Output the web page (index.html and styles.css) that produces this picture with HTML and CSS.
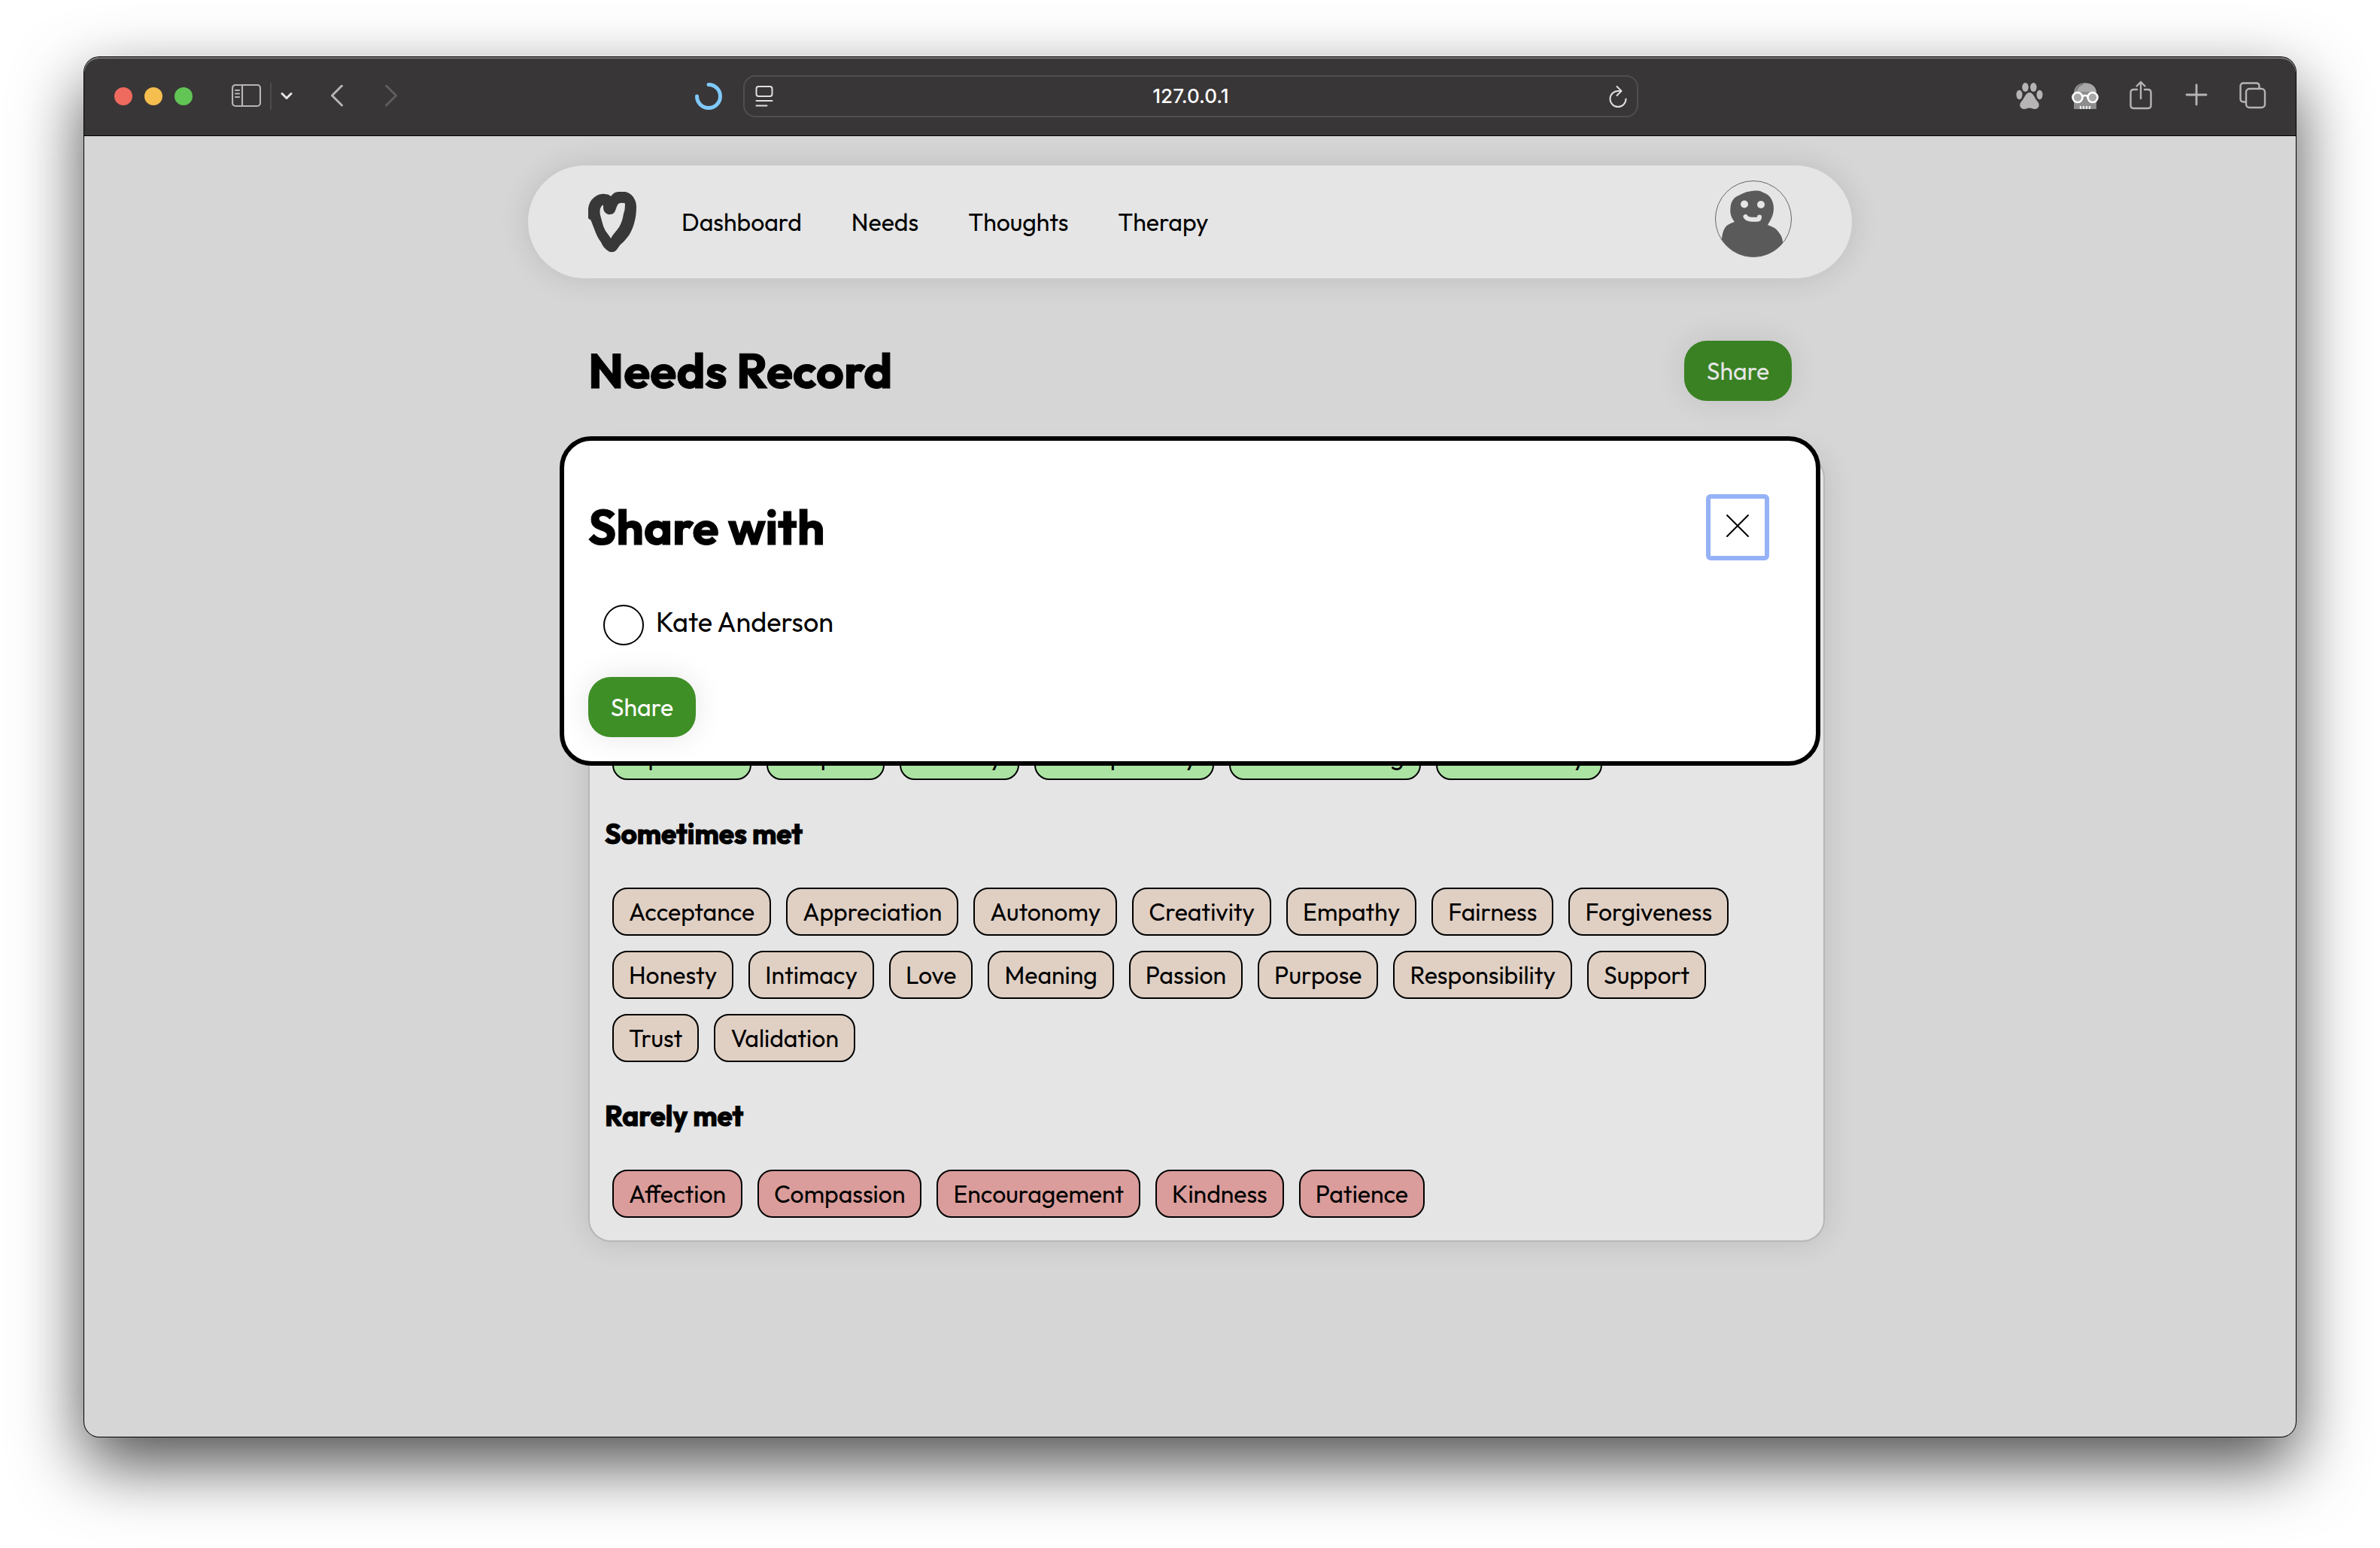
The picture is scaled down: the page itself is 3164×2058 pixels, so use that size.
FILE: index.html
```html
<!DOCTYPE html>
<html lang="en">
<head>
<meta charset="utf-8">
<title>Needs Record</title>
<link rel="stylesheet" href="styles.css">
</head>
<body>
<div class="window">
  <header class="toolbar">
    <div class="toolbar-left">
      <div class="lights"><span class="light red"></span><span class="light yellow"></span><span class="light green"></span></div>
      <div class="sidebar-tools">
        <button class="tool" aria-label="Sidebar"><svg width="39" height="32" viewBox="0 0 39 32" fill="none" stroke="#b7b4b5" stroke-width="2.200"><rect x="1" y="1" width="37" height="28" rx="4"/><path d="M14 1v28"/><path d="M5 8h5M5 12.500h5M5 17h5" stroke-linecap="round"/></svg></button>
        <span class="divider"></span>
        <button class="tool" aria-label="Tab groups"><svg width="16" height="12" viewBox="0 0 16 12" fill="none" stroke="#e6e5e5" stroke-width="3" stroke-linecap="round" stroke-linejoin="round"><path d="M2 2.500l6 6 6-6"/></svg></button>
      </div>
      <div class="history">
        <button class="tool" aria-label="Back"><svg width="18" height="30" viewBox="0 0 18 30" fill="none" stroke="#b7b4b5" stroke-width="3" stroke-linecap="round" stroke-linejoin="round"><path d="M15.500 1L2.500 14l13 13"/></svg></button>
        <button class="tool" aria-label="Forward"><svg width="18" height="30" viewBox="0 0 18 30" fill="none" stroke="#5f5d5e" stroke-width="3" stroke-linecap="round" stroke-linejoin="round"><path d="M2.500 1l13 13-13 13"/></svg></button>
      </div>
      <svg class="spinner" width="36" height="36" viewBox="0 0 36 36" fill="none" stroke="#7fc9fb" stroke-width="5" stroke-linecap="round"><path d="M18 2.500A15.500 15.500 0 1 1 2.500 18"/></svg>
    </div>
    <div class="address">
      <svg width="24" height="30" viewBox="0 0 24 30" fill="none" stroke="#e0dfdf" stroke-width="2" stroke-linecap="round"><rect x="1.500" y="2" width="21" height="13" rx="3"/><path d="M1.500 21h21M1.500 27.500h14"/></svg>
      <input class="url" type="text" value="127.0.0.1" aria-label="Address">
      <button class="tool" aria-label="Reload"><svg width="26" height="30" viewBox="0 0 26 30" fill="none" stroke="#e0dfdf" stroke-width="2" stroke-linecap="round" stroke-linejoin="round"><path d="M16.500 8H13A10.500 10.500 0 1 0 23.500 18.500M11.500 2l6 6-6 6"/></svg></button>
    </div>
    <div class="toolbar-right">
      <button class="tool" aria-label="Paw extension"><svg width="40" height="40" viewBox="0 0 40 40" fill="#b7b4b5"><ellipse cx="14.500" cy="10" rx="4.300" ry="6"/><ellipse cx="25.300" cy="10" rx="4.300" ry="6"/><ellipse cx="6.500" cy="20" rx="4" ry="6.200"/><ellipse cx="33.500" cy="20" rx="4" ry="6.200"/><path d="M20 17C15 17 13.500 24 10 28C5 33 7.500 39 13 39C16 39 17 37.500 20 37.500S24 39 27 39C32.500 39 35 33 30 28C26.500 24 25 17 20 17Z"/></svg></button>
      <button class="tool" aria-label="Privacy extension"><svg width="40" height="40" viewBox="0 0 40 40"><path d="M5 19C5 9 11 4.500 20 4.500S35 9 35 19V39H5Z" fill="#8d8d8d"/><path d="M6 16C7 8.500 12 4.500 20 4.500S34 9 35 16Z" fill="#a8a8a8"/><path d="M8 15C9 10 12 7 17 6" stroke="#787878" stroke-width="2" fill="none"/><g fill="#a9a9a9" stroke="#fff" stroke-width="2.600"><circle cx="10" cy="23.500" r="6.500"/><circle cx="30" cy="23.500" r="6.500"/><path d="M16.500 22q3.500-2 7 0" fill="none"/></g><path d="M14 35v4M18 35v4M22 35v4M26 35v4" stroke="#e8e8e8" stroke-width="2.400"/></svg></button>
      <button class="tool" aria-label="Share page"><svg width="40" height="40" viewBox="0 0 40 40" fill="none" stroke="#b7b4b5" stroke-width="2.400" stroke-linecap="round" stroke-linejoin="round"><path d="M15 13h-4.500q-4 0-4 4v17q0 4 4 4h19q4 0 4-4V17q0-4-4-4H25M20 25V3M14.500 8.500L20 3l5.500 5.500"/></svg></button>
      <button class="tool" aria-label="New tab"><svg width="40" height="40" viewBox="0 0 40 40" fill="none" stroke="#b7b4b5" stroke-width="2.800" stroke-linecap="round"><path d="M7 20h26M20 7v26"/></svg></button>
      <button class="tool" aria-label="All tabs"><svg width="40" height="40" viewBox="0 0 40 40" fill="none" stroke="#b7b4b5" stroke-width="2.400"><rect x="12" y="12" width="25" height="25" rx="4.500"/><path d="M12 29.500H8.500q-4 0-4-4v-17q0-4 4-4h17q4 0 4 4V12"/></svg></button>
    </div>
  </header>

  <div class="page">
    <nav class="navbar">
      <a class="logo" href="#" aria-label="Home"><svg width="64" height="80" viewBox="0 0 64 80"><path fill="#383838" fill-rule="evenodd" d="M0 35C-1 25 0 18 3 13C7 7 14 2 22 3C26 3 28 4 30 6C33 2 36 0 40 0C47-1 52 0 56 3C61 7 64 13 64 20C64 28 63 35 61 42C59 49 57 53 54 58C50 63 47 67 43 70C40 73 38 79 33 80Q30 81 27 79C22 76 19 72 17 67C13 62 11 57 9 52C7 47 5 41 3 37Q1 37 0 35ZM16 22C18 18 19 17 20 18C20 22 20 25 22 27Q25 31 29 30Q33 30 35 27C37 24 37 20 40 16Q43 14 46 15Q49 14 49 17Q49 24 47 29C46 36 44 42 41 47C37 53 33 56 30 62C28 58 25 55 23 52C21 48 20 46 19 42C18 38 17 35 16 31Q15 26 16 22Z"/></svg></a>
      <ul class="menu">
        <li><a href="#">Dashboard</a></li>
        <li><a href="#">Needs</a></li>
        <li><a href="#">Thoughts</a></li>
        <li><a href="#">Therapy</a></li>
      </ul>
      <a class="avatar" href="#" aria-label="Profile"><svg width="102" height="102" viewBox="0 0 102 102"><defs><clipPath id="disc"><circle cx="51" cy="51" r="50.500"/></clipPath></defs><g clip-path="url(#disc)"><path fill="#5a5a5a" d="M26 55C20 47 20 42 20.500 36C21 27 26 22 31 20C36 18 40 15 46 14.500C54 13 59 13 63 15.500C70 18 73 21 75 25C80 34 78 45 74 52L70 59C76 62 80 62 84 68C89 74 90 78 90 84V102H9V77C10 69 12 62 17 59Q22 56 26 55Z"/></g><circle cx="39" cy="31.500" r="5" fill="#e5e5e5"/><circle cx="61" cy="32" r="5" fill="#e5e5e5"/><path d="M40.500 48Q42.500 51.500 49 51.800H56Q59 51.500 59 48.500" fill="none" stroke="#e5e5e5" stroke-width="6" stroke-linecap="round"/><circle cx="51" cy="51" r="50.500" fill="none" stroke="#666"/></svg></a>
    </nav>

    <main class="content">
      <div class="heading">
        <h1>Needs Record</h1>
        <button class="share dimmed">Share</button>
      </div>

      <section class="card">
        <div class="rows met">
          <ul><li>Openness</li><li>Respect</li><li>Security</li><li>Transparency</li><li>Understanding</li><li>Vulnerability</li></ul>
        </div>
        <h3>Sometimes met</h3>
        <div class="rows sometimes">
          <ul><li>Acceptance</li><li>Appreciation</li><li>Autonomy</li><li>Creativity</li><li>Empathy</li><li>Fairness</li><li>Forgiveness</li></ul>
          <ul><li>Honesty</li><li>Intimacy</li><li>Love</li><li>Meaning</li><li>Passion</li><li>Purpose</li><li>Responsibility</li><li>Support</li></ul>
          <ul><li>Trust</li><li>Validation</li></ul>
        </div>
        <h3>Rarely met</h3>
        <div class="rows rarely">
          <ul><li>Affection</li><li>Compassion</li><li>Encouragement</li><li>Kindness</li><li>Patience</li></ul>
        </div>
      </section>
    </main>

    <dialog class="dialog" open aria-labelledby="share-title">
      <div class="dialog-head">
        <h2 id="share-title">Share with</h2>
        <button class="close" aria-label="Close"><svg width="32" height="32" viewBox="0 0 32 32" fill="none" stroke="#000" stroke-width="2" stroke-linecap="round"><path d="M2 2l28 28M30 2L2 30"/></svg></button>
      </div>
      <div class="option">
        <input type="radio" id="kate" name="person">
        <label for="kate">Kate Anderson</label>
      </div>
      <button class="share">Share</button>
    </dialog>
  </div>
</div>
</body>
</html>
```
FILE: styles.css
```css
* { box-sizing: border-box; }

body {
  margin: 0;
  min-height: 100vh;
  padding: 76px 112px 148px;
  display: flex;
  background: #fff;
  color: #000;
  font-family: Outfit, Lato, sans-serif;
  font-size: 32px;
  line-height: 40px;
}

button { font: inherit; border: 0; cursor: pointer; }
a { color: inherit; text-decoration: none; }
ul { list-style: none; margin: 0; padding: 0; }
svg { display: block; }

/* Browser window */
.window {
  flex: 1;
  display: flex;
  flex-direction: column;
  border-radius: 20px;
  background: #d6d6d6;
  box-shadow: 0 0 0 1px #000, 0 36px 90px rgba(0, 0, 0, 0.7);
}

.toolbar {
  display: grid;
  grid-template-columns: 1fr 1190px 1fr;
  align-items: center;
  height: 105px;
  padding: 0 38px 0 40px;
  background: #393637;
  border-bottom: 1px solid #000;
  border-radius: 20px 20px 0 0;
  box-shadow: inset 0 2px 0 #767575;
}

.toolbar-left, .toolbar-right, .lights, .sidebar-tools, .history {
  display: flex;
  align-items: center;
}

.toolbar-left { gap: 50px; }
.toolbar-right { justify-content: flex-end; gap: 34px; padding-bottom: 4px; }
.lights { gap: 16px; padding-right: 2px; }
.light { width: 24px; height: 24px; border-radius: 50%; }
.red { background: #ee6a5f; }
.yellow { background: #f5be4f; }
.green { background: #61c455; }
.sidebar-tools { gap: 12px; }
.divider { width: 2px; height: 36px; background: #4d4b4c; }
.history { gap: 54px; }
.spinner { margin-left: auto; margin-right: 28px; }
.tool { display: block; padding: 0; background: none; }

.address {
  display: flex;
  align-items: center;
  height: 56px;
  padding: 0 12px 0 14px;
  border: 2px solid #504e4f;
  border-radius: 16px;
}

.url {
  flex: 1;
  min-width: 0;
  border: 0;
  background: none;
  color: #fff;
  font: 500 26px/32px Inter, sans-serif;
  text-align: center;
}

/* Page */
.page {
  position: relative;
  flex: 1;
  padding: 39px 40px 80px;
}

.navbar {
  display: flex;
  align-items: center;
  max-width: 1760px;
  height: 150px;
  margin: 0 auto;
  padding: 0 80px;
  border-radius: 75px;
  background: #e5e5e5;
  box-shadow: 0 0 40px rgba(0, 0, 0, 0.12);
}

.menu { display: flex; gap: 66px; margin-left: 60px; }
.avatar { margin-left: auto; margin-bottom: 8px; }

.content { max-width: 1600px; margin: 0 auto; }

.heading {
  display: flex;
  align-items: center;
  justify-content: space-between;
  padding: 83px 0 72px;
}

h1, h2, h3 { -webkit-text-stroke: 1px #000; }
h1, h2 { margin: 0; font-size: 64px; line-height: 80px; }

.share {
  width: 143px;
  height: 80px;
  border-radius: 30px;
  background: #3f8f27;
  color: #fff;
  box-shadow: 0 0 40px rgba(0, 0, 0, 0.1);
}

.share.dimmed { background: #398123; color: #e5e5e5; }

.card {
  width: calc(100% + 44px);
  padding: 20px;
  border: 2px solid #b7b7b7;
  border-radius: 30px;
  background: #e5e5e5;
  box-shadow: 0 0 40px rgba(0, 0, 0, 0.12);
}

h3 { margin: 38px 0; font-size: 37px; line-height: 47px; }

.rows { display: flex; flex-direction: column; gap: 20px; padding: 10px; }
.rows ul { display: flex; gap: 20px; }
.rows.met { padding-top: 346px; }

.rows li {
  padding: 10px 20px;
  border: 2px solid #000;
  border-radius: 20px;
}

.met li { background: #abe3a3; }
.sometimes li { background: #e0d0c4; }
.rarely li { background: #da9d9b; }

/* Share dialog, laid over the record */
.dialog {
  position: absolute;
  top: 399px;
  left: 0;
  right: 0;
  width: calc(100% - 80px);
  max-width: 1676px;
  margin: 0 auto;
  padding: 32px;
  border: 6px solid #000;
  border-radius: 42px;
  background: #fff;
  color: #000;
}

.dialog-head {
  display: flex;
  align-items: center;
  justify-content: space-between;
  padding: 39px 30px 0 0;
}

.close {
  display: flex;
  justify-content: center;
  width: 84px;
  height: 88px;
  padding: 20px 0 0;
  border: 6px solid #96b2f7;
  border-radius: 6px;
  background: #fff;
}

.option {
  display: flex;
  align-items: flex-start;
  gap: 16px;
  padding: 59px 20px 42px;
}

.option input {
  appearance: none;
  width: 54px;
  height: 54px;
  margin: 0;
  border: 2px solid #000;
  border-radius: 50%;
}

.option label { font-size: 36px; line-height: 46px; }
```
